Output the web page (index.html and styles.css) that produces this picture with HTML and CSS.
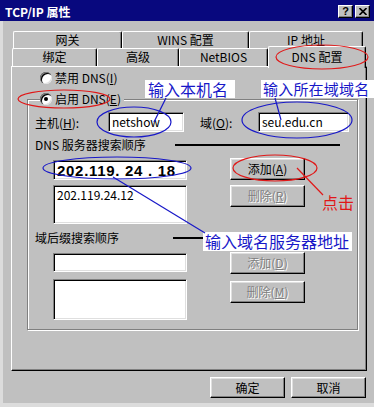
FILE: index.html
```html
<!DOCTYPE html>
<html lang="zh-CN">
<head>
  <meta charset="UTF-8" />
  <title>TCP/IP 属性</title>
  <link rel="stylesheet" href="styles.css">
</head>
<body>
  <div class="window">
    <!-- barre de titre -->
    <div class="titlebar">
      <span class="title">TCP/IP 属性</span>
      <div class="title-btns">
        <span class="tbtn">?</span>
        <span class="tbtn">
          <svg width="8" height="7" viewBox="0 0 8 7"><path d="M0.5 0 L7.5 7 M7.5 0 L0.5 7" stroke="#000" stroke-width="1.6"/></svg>
        </span>
      </div>
    </div>

    <!-- onglets -->
    <div class="tabs">
      <div class="tab-row back">
        <div class="tab tab-gw">网关</div>
        <div class="tab tab-wins">WINS 配置</div>
        <div class="tab tab-ip">IP 地址</div>
      </div>
      <div class="tab-row front">
        <div class="tab tab-bind">绑定</div>
        <div class="tab tab-adv">高级</div>
        <div class="tab tab-nb">NetBIOS</div>
        <div class="tab tab-active">DNS 配置</div>
      </div>
    </div>

    <!-- contenu de l'onglet DNS -->
    <div class="panel">
      <div class="radio radio-off">
        <span class="radio-dot"></span>
        <span>禁用 DNS(<u>I</u>)</span>
      </div>

      <div class="group">
        <div class="radio radio-on">
          <span class="radio-dot checked"></span>
          <span>启用 DNS(<u>E</u>)</span>
        </div>

        <div class="host-row">
          <span class="lbl-host">主机(<u>H</u>):</span>
          <div class="edit edit-host">netshow</div>
          <span class="lbl-domain">域(<u>O</u>):</span>
          <div class="edit edit-domain">seu.edu.cn</div>
        </div>

        <div class="section-title">
          <span class="st-text st-dns">DNS 服务器搜索顺序</span>
          <span class="st-line st-line-dns"></span>
        </div>

        <div class="list-block block-dns">
          <div class="list-col">
            <div class="edit edit-ip">202.119. 24 . 18</div>
            <div class="listbox lb-dns">202.119.24.12</div>
          </div>
          <div class="btn-col">
            <button class="btn btn-side">添加(<u>A</u>)</button>
            <button class="btn btn-side disabled">删除(<u>R</u>)</button>
          </div>
        </div>

        <div class="section-title section-suffix">
          <span class="st-text st-suffix">域后缀搜索顺序</span>
          <span class="st-line st-line-suffix"></span>
        </div>

        <div class="list-block block-suffix">
          <div class="list-col">
            <div class="edit edit-suffix"></div>
            <div class="listbox lb-suffix"></div>
          </div>
          <div class="btn-col">
            <button class="btn btn-side disabled">添加(<u>D</u>)</button>
            <button class="btn btn-side disabled">删除(<u>M</u>)</button>
          </div>
        </div>
      </div>
    </div>

    <div class="footer">
      <button class="btn btn-foot">确定</button>
      <button class="btn btn-foot">取消</button>
    </div>

    <!-- annotations par-dessus la capture -->
    <div class="note note-host">输入本机名</div>
    <div class="note note-domain">输入所在域域名</div>
    <div class="note note-server">输入域名服务器地址</div>
    <div class="note note-click">点击</div>

    <svg class="marks" width="374" height="407" viewBox="0 0 374 407">
      <g fill="none" stroke-width="1.2">
        <ellipse cx="322" cy="57" rx="46" ry="12" stroke="#e01818"/>
        <ellipse cx="64" cy="99" rx="46" ry="9" stroke="#e01818"/>
        <ellipse cx="275" cy="168" rx="42" ry="13" stroke="#e01818"/>
        <line x1="297" y1="168" x2="323" y2="195" stroke="#e01818"/>

        <ellipse cx="134" cy="122" rx="37" ry="15" stroke="#1818c8"/>
        <ellipse cx="297" cy="120" rx="55" ry="18" stroke="#1818c8"/>
        <ellipse cx="117" cy="168" rx="74" ry="11" stroke="#1818c8"/>
        <line x1="166" y1="98" x2="154" y2="122" stroke="#1818c8"/>
        <line x1="275" y1="98" x2="281" y2="120" stroke="#1818c8"/>
        <line x1="113" y1="177" x2="205" y2="233" stroke="#1818c8"/>
      </g>
    </svg>
  </div>
</body>
</html>
```

FILE: styles.css
```css
/* --- Reset et fond --- */
* {
  margin: 0;
  padding: 0;
  box-sizing: border-box;
}
html,
body {
  width: 374px;
  height: 407px;
  overflow: hidden;
  background: #c0c0c0;
}
body {
  font-family: "Noto Sans CJK SC", sans-serif;
  font-size: 12px;
  color: #000;
}

/* --- Fenêtre --- */
.window {
  position: relative;
  width: 374px;
  height: 407px;
  background: #c0c0c0;
  box-shadow: inset 3px 0 #dcdcdc, inset 0 -4px #dcdcdc;
}

/* --- Barre de titre --- */
.titlebar {
  height: 21px;
  display: flex;
  align-items: center;
  padding: 2px 4px 0 5px;
  background: #08087e;
}
.title {
  color: #fff;
  font-weight: bold;
  font-size: 12px;
  line-height: 14px;
}
.title-btns {
  margin-left: auto;
  display: flex;
  gap: 2px;
}
.tbtn {
  width: 15px;
  height: 13px;
  display: flex;
  align-items: center;
  justify-content: center;
  background: #c0c0c0;
  border: 1px solid;
  border-color: #fff #000 #000 #fff;
  box-shadow: inset -1px -1px #808080;
  font-family: "Liberation Sans", sans-serif;
  font-weight: bold;
  font-size: 11px;
  line-height: 11px;
}

/* --- Onglets --- */
.tabs {
  margin-top: 10px;
}
.tab-row {
  display: flex;
  height: 18px;
}
.tab-row.back {
  margin-left: 13px;
}
.tab-row.front {
  margin-left: 12px;
  margin-top: -1px;
}
.tab {
  height: 18px;
  background: #c0c0c0;
  border-top: 1px solid #fff;
  border-left: 1px solid #fff;
  border-right: 1px solid #000;
  border-radius: 2px 2px 0 0;
  box-shadow: inset -1px 0 #808080;
  text-align: center;
  line-height: 16px;
  position: relative;
}
.tab-gw { width: 109px; }
.tab-wins { width: 127px; }
.tab-ip { width: 114px; }
.tab-bind { width: 85px; }
.tab-adv { width: 82px; }
.tab-nb { width: 89px; }
.tab-active {
  width: 98px;
  height: 22px;
  margin-top: -2px;
  padding-top: 2px;
  z-index: 2;
}

/* --- Panneau --- */
.panel {
  margin-left: 11px;
  width: 356px;
  height: 305px;
  border: 1px solid;
  border-color: #fff #000 #000 #fff;
  box-shadow: inset -1px -1px #808080;
  padding-top: 4px;
}

/* --- Boutons radio --- */
.radio {
  display: flex;
  align-items: center;
  gap: 3px;
  height: 14px;
  line-height: 14px;
}
.radio-off {
  margin-left: 28px;
}
.radio-on {
  align-self: flex-start;
  margin: -8px 0 0 12px;
  padding-right: 3px;
  background: #c0c0c0;
}
.radio-dot {
  width: 12px;
  height: 12px;
  border-radius: 50%;
  background: #fff;
  box-shadow: inset 1px 1px 0 #808080, inset 2px 2px 0 #000, inset -1px -1px 0 #dfdfdf;
  position: relative;
}
.radio-dot.checked::after {
  content: "";
  position: absolute;
  left: 4px;
  top: 4px;
  width: 4px;
  height: 4px;
  border-radius: 50%;
  background: #000;
}

/* --- Cadre de groupe --- */
.group {
  display: flex;
  flex-direction: column;
  margin: 14px 8px 0 15px;
  height: 231px;
  border: 1px solid #808080;
  box-shadow: inset 1px 1px #fff, 1px 1px #fff;
}

/* --- Ligne hôte / domaine --- */
.host-row {
  display: flex;
  align-items: center;
  margin-top: 6px;
  padding-left: 7px;
  height: 20px;
}
.lbl-host {
  width: 73px;
}
.lbl-domain {
  width: 58px;
  margin-left: 16px;
}

/* --- Champs de saisie --- */
.edit,
.listbox {
  background: #fff;
  border: 1px solid;
  border-color: #808080 #fff #fff #808080;
  box-shadow: inset 1px 1px #000, inset -1px -1px #dfdfdf;
  padding: 2px 3px;
  line-height: 14px;
  white-space: pre;
  overflow: hidden;
}
.edit-host {
  width: 76px;
  height: 20px;
}
.edit-domain {
  width: 91px;
  height: 20px;
}
.edit-ip {
  height: 20px;
  padding: 1px 3px;
  font-family: "Liberation Sans", sans-serif;
  font-weight: bold;
  font-size: 15px;
  line-height: 17px;
  letter-spacing: 0.7px;
}
.edit-suffix {
  height: 19px;
  margin-top: 1px;
}
.lb-dns {
  height: 39px;
  margin-top: 5px;
}
.lb-suffix {
  height: 41px;
  margin-top: 7px;
}

/* --- Titres de section --- */
.section-title {
  display: flex;
  align-items: center;
  height: 14px;
  margin-top: 6px;
  padding-left: 7px;
  line-height: 14px;
}
.section-suffix {
  margin-top: 7px;
}
.st-dns { width: 140px; }
.st-suffix { width: 138px; }
.st-line {
  height: 2px;
  background: #000;
}
.st-line-dns { width: 165px; }
.st-line-suffix { width: 40px; }

/* --- Listes + boutons --- */
.list-block {
  display: flex;
  align-items: flex-start;
  padding-left: 25px;
  margin-top: 6px;
}
.block-suffix {
  margin-top: 7px;
}
.list-col {
  display: flex;
  flex-direction: column;
  width: 134px;
}
.block-dns .list-col {
  margin-top: 2px;
}
.btn-col {
  display: flex;
  flex-direction: column;
  gap: 5px;
  margin-left: 43px;
}
.block-suffix .btn-col {
  gap: 7px;
}

/* --- Boutons --- */
.btn {
  font-family: inherit;
  font-size: 12px;
  color: #000;
  background: #c0c0c0;
  border: 1px solid;
  border-color: #fff #000 #000 #fff;
  box-shadow: inset -1px -1px #808080, inset 1px 1px #dfdfdf;
  line-height: 14px;
}
.btn-side {
  width: 75px;
  height: 22px;
}
.btn.disabled {
  color: #808080;
  text-shadow: 1px 1px 0 #fff;
}

/* --- Pied de fenêtre --- */
.footer {
  display: flex;
  justify-content: flex-end;
  gap: 6px;
  margin-top: 6px;
  padding-right: 8px;
}
.btn-foot {
  width: 75px;
  height: 21px;
}

/* --- Annotations --- */
.marks {
  position: absolute;
  left: 0;
  top: 0;
  pointer-events: none;
  z-index: 6;
}
.note {
  position: absolute;
  z-index: 5;
  font-size: 16px;
  line-height: 18px;
  color: #1818c8;
  background: #fff;
  padding-left: 3px;
  white-space: nowrap;
}
.note-host {
  left: 145px;
  top: 80px;
  width: 90px;
  height: 18px;
}
.note-domain {
  left: 261px;
  top: 80px;
  width: 113px;
  height: 18px;
  padding-left: 2px;
  font-size: 15px;
  letter-spacing: 0.2px;
}
.note-server {
  left: 203px;
  top: 232px;
  width: 149px;
  height: 19px;
  padding-left: 2px;
}
.note-click {
  left: 322px;
  top: 193px;
  color: #e01818;
  background: none;
  padding-left: 0;
}
```
